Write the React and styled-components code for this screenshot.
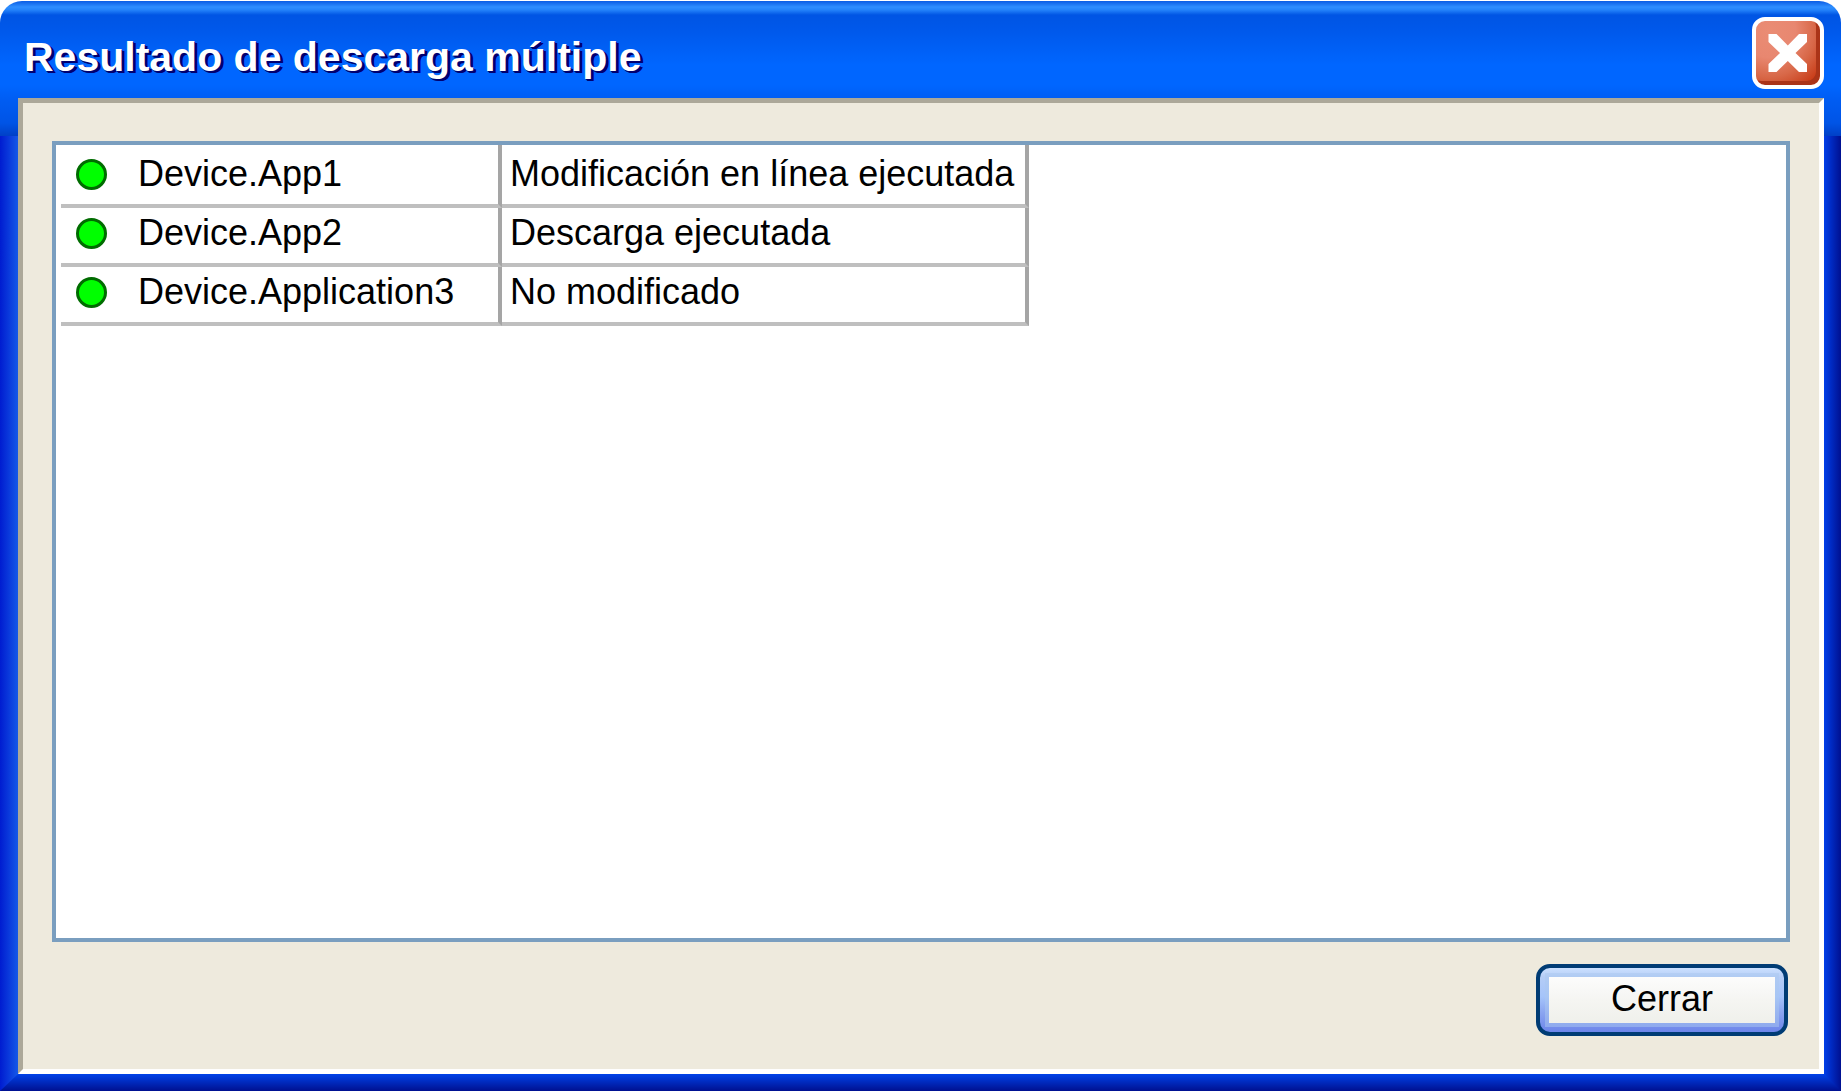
import styled, { createGlobalStyle } from "styled-components";

const GlobalStyle = createGlobalStyle`
  * {
    box-sizing: border-box;
  }

  body {
    margin: 0;
    background: #ffffff;
    color: #000000;
    font-family: "Liberation Sans", Arial, sans-serif;
    font-size: 36px;
    line-height: 48px;
  }
`;

/**
 * Outer window with the blue side edges.
 * @component
 */
const Window = styled.main`
  display: flex;
  flex-direction: column;
  min-height: calc(100vh - 2px);
  margin: 1px 1px 1px 0;
  border-radius: 22px 22px 0 0;
  background:
    linear-gradient(
        #0a5ce4 0,
        #2e8eff 6px,
        #2382fa 9px,
        #0055e4 14px,
        #0058ea 28px,
        #0066ff 64px,
        #0066ff 84px,
        #005cf2 100px,
        #0054e6 122px,
        #0040c6 135px
      )
      top / 100% 135px no-repeat,
    linear-gradient(to right, #001cd0, #1458e8) left / 18px 100% no-repeat,
    linear-gradient(to right, #003ee8, #001090) right / 17px 100% no-repeat;
`;

const TitleBar = styled.header`
  display: flex;
  justify-content: space-between;
  align-items: center;
  height: 97px;
  padding: 6px 17px 0 24px;
`;

const Title = styled.h1`
  margin: 0;
  padding-top: 8px;
  color: #ffffff;
  font-size: 41px;
  line-height: 48px;
  font-weight: 700;
  text-shadow: 1px 1px 0 #000070, 2px 2px 0 #000070, 3px 2px 0 #000070;
`;

const CloseButton = styled.button`
  display: flex;
  justify-content: center;
  align-items: center;
  width: 72px;
  height: 72px;
  padding: 0;
  border: 4px solid #ffffff;
  border-radius: 13px;
  background: radial-gradient(circle at 20% 15%, #ea8c74 0, #e88770 36%, #d86848 62%, #c83c18 88%);
  box-shadow: inset -4px -4px 0 #ab3418;
`;

const Body = styled.section`
  display: flex;
  flex: 1;
  flex-direction: column;
  gap: 22px;
  margin: 0 17px 0 18px;
  padding: 38px 29px 33px;
  border: 5px solid;
  border-color: #aca899 #ffffff #ffffff #aca899;
  background: #eeeadd;
`;

const ResultPanel = styled.div`
  flex: 1;
  padding-left: 5px;
  border: 4px solid #7a9ebf;
  background: #ffffff;
`;

const ResultTable = styled.table`
  border-collapse: separate;
  border-spacing: 0;
`;

const ResultRow = styled.tr`
  height: 59px;

  &:first-child {
    height: 63px;
  }
`;

const Cell = styled.td`
  width: ${(props) => props.$width};
  padding: 0 0 6px ${(props) => props.$indent ?? "0px"};
  border-bottom: 4px solid #bfbfbf;
  border-right: ${(props) => (props.$divider ? "4px solid #a5a5a5" : "none")};
  vertical-align: bottom;
  white-space: nowrap;
`;

const StatusDot = styled.span`
  display: block;
  width: 31px;
  height: 31px;
  margin-bottom: 8px;
  border: 3px solid #006c00;
  border-radius: 50%;
  background: #00ff00;
`;

const Actions = styled.footer`
  display: flex;
  justify-content: flex-end;
  padding-right: 2px;
`;

const ActionButton = styled.button`
  width: 252px;
  height: 72px;
  padding: 9px;
  border: 4px solid #003c74;
  border-radius: 14px;
  background: linear-gradient(#cbe0ff, #b5cdf6 14%, #a5c4fa 45%, #8aa4f0 70%, #6c85ea);
  color: #000000;
  font: inherit;
`;

const ButtonFace = styled.span`
  display: block;
  height: 46px;
  background: linear-gradient(#fcfcfc, #f5f5f2 50%, #eff0eb);
  box-shadow: 0 0 0 4px rgba(170, 200, 240, 0.5);
  line-height: 44px;
`;

const BottomEdge = styled.div`
  height: 17px;
  background: linear-gradient(#0042e8, #001090);
  clip-path: polygon(18px 0, calc(100% - 17px) 0, 100% 100%, 0 100%);
`;

const results = [
  { device: "Device.App1", status: "Modificación en línea ejecutada" },
  { device: "Device.App2", status: "Descarga ejecutada" },
  { device: "Device.Application3", status: "No modificado" },
];

function CloseIcon() {
  return (
    <svg width="40" height="40" viewBox="0 0 40 40" fill="#ffffff" aria-hidden="true">
      <path d="M0.5 1H8.5L19.8 12.4L31 1H39V9L27.5 20L39 31V39H31L19.8 28L8.5 39H0.5V31L12 20L0.5 9Z" />
    </svg>
  );
}

/**
 * Dialog listing the outcome of a download to several devices.
 * @component
 */
export default function App() {
  return (
    <>
      <GlobalStyle />
      <Window>
        <TitleBar>
          <Title>Resultado de descarga múltiple</Title>
          <CloseButton type="button" aria-label="Cerrar ventana">
            <CloseIcon />
          </CloseButton>
        </TitleBar>
        <Body>
          <ResultPanel>
            <ResultTable>
              <tbody>
                {results.map(({ device, status }) => (
                  <ResultRow key={device}>
                    <Cell $width="77px" $indent="15px">
                      <StatusDot />
                    </Cell>
                    <Cell $width="364px" $divider>
                      {device}
                    </Cell>
                    <Cell $width="527px" $indent="8px" $divider>
                      {status}
                    </Cell>
                  </ResultRow>
                ))}
              </tbody>
            </ResultTable>
          </ResultPanel>
          <Actions>
            <ActionButton type="button">
              <ButtonFace>Cerrar</ButtonFace>
            </ActionButton>
          </Actions>
        </Body>
        <BottomEdge />
      </Window>
    </>
  );
}
